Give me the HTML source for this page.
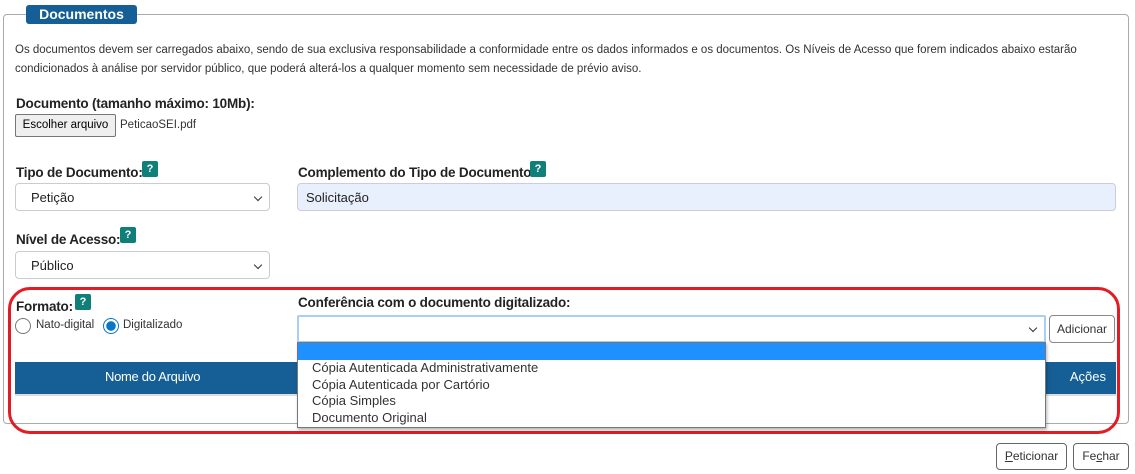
<!DOCTYPE html>
<html><head><meta charset="utf-8"><style>
body{margin:0;width:1135px;height:474px;background:#fff;font-family:"Liberation Sans",Arial,sans-serif;color:#222;position:relative;overflow:hidden}
.a{position:absolute}
.fs{left:3px;top:14px;width:1124px;height:408px;border:1px solid #aaa;border-radius:4px}
.lg{left:26px;top:5px;width:111px;height:19px;background:#155f96;border-radius:3px;color:#fff;font-weight:bold;font-size:14px;text-align:center;line-height:19px}
.t{font-size:11.5px;color:#333;line-height:19px}
.lb{font-size:13.5px;font-weight:bold;color:#222;letter-spacing:-0.2px}
.q{width:16px;height:16px;background:#107f7a;color:#fff;font-size:11px;font-weight:bold;text-align:center;line-height:16px;border-radius:2px}
.sel{border:1px solid #ccc;border-radius:4px;height:28px;background:#fff;font-size:13px;line-height:28px;box-sizing:border-box}
.chev{position:absolute;right:8px;top:10px;width:5px;height:5px;border-right:1.5px solid #333;border-bottom:1.5px solid #333;transform:rotate(45deg)}
.btn{border:1px solid #666;border-radius:4px;background:#fff;font-size:12px;text-align:center;box-sizing:border-box;color:#333}
.rad{width:16px;height:16px;border:1px solid #777;border-radius:50%;box-sizing:border-box}
</style></head><body>
<div class="a fs"></div>
<div class="a lg">Documentos</div>
<div class="a t" style="left:15px;top:41px;width:1105px">Os documentos devem ser carregados abaixo, sendo de sua exclusiva responsabilidade a conformidade entre os dados informados e os documentos. Os Níveis de Acesso que forem indicados abaixo estarão condicionados à análise por servidor público, que poderá alterá-los a qualquer momento sem necessidade de prévio aviso.</div>
<div class="a lb" style="left:16px;top:96px">Documento (tamanho máximo: 10Mb):</div>
<div class="a btn" style="left:15px;top:114px;width:101px;height:23px;line-height:21px;background:#efefef;border-color:#767676;border-radius:2px;color:#000;font-size:11.5px">Escolher arquivo</div>
<div class="a t" style="left:120px;top:116px">PeticaoSEI.pdf</div>

<div class="a lb" style="left:16px;top:165px">Tipo de Documento:</div>
<div class="a q" style="left:142px;top:161px">?</div>
<div class="a sel" style="left:15px;top:183px;width:255px;padding-left:15px">Petição<div class="chev"></div></div>
<div class="a lb" style="left:298px;top:165px">Complemento do Tipo de Documento:</div>
<div class="a q" style="left:530px;top:161px">?</div>
<div class="a sel" style="left:297px;top:183px;width:819px;padding-left:8px;background:#e8f0fe;border-color:#ccd">Solicitação</div>

<div class="a lb" style="left:16px;top:232px">Nível de Acesso:</div>
<div class="a q" style="left:120px;top:227px">?</div>
<div class="a sel" style="left:15px;top:251px;width:255px;padding-left:15px">Público<div class="chev"></div></div>

<div class="a" style="left:8px;top:287px;width:1106px;height:141px;border:3px solid #e31c23;border-radius:22px"></div>
<div class="a lb" style="left:16px;top:299px">Formato:</div>
<div class="a q" style="left:75px;top:294px">?</div>
<div class="a rad" style="left:15px;top:318px"></div>
<div class="a t" style="left:36px;top:316px">Nato-digital</div>
<div class="a rad" style="left:103px;top:318px;border:1px solid #0a76c7;background:radial-gradient(circle,#0a76c7 0 4.5px,#fff 5px)"></div>
<div class="a t" style="left:123px;top:316px">Digitalizado</div>
<div class="a lb" style="left:298px;top:295px">Conferência com o documento digitalizado:</div>
<div class="a sel" style="left:297px;top:315px;width:749px;border:2px solid #a8cff3;border-radius:2px"><div class="chev" style="right:8px;top:8px"></div></div>
<div class="a btn" style="left:1049px;top:315px;width:66px;height:28px;line-height:26px;border-color:#888">Adicionar</div>
<div class="a" style="left:15px;top:362px;width:1101px;height:32px;background:#155f96;color:#fff;font-size:13px;line-height:30px;border-bottom:2px solid #ddd"><span class="a" style="left:90px;letter-spacing:-0.3px">Nome do Arquivo</span><span class="a" style="right:10px">Ações</span></div>
<div class="a" style="left:297px;top:342px;width:747px;height:84px;background:#fff;border:1px solid #777;box-shadow:1px 2px 3px rgba(0,0,0,.3);font-size:13px;color:#333;line-height:16.5px">
<div style="background:#1e90ff;height:17px"></div>
<div style="padding-left:14px">Cópia Autenticada Administrativamente<br>Cópia Autenticada por Cartório<br>Cópia Simples<br>Documento Original</div></div>

<div class="a btn" style="left:996px;top:443px;width:71px;height:27px;line-height:25px"><u>P</u>eticionar</div>
<div class="a btn" style="left:1073px;top:443px;width:56px;height:27px;line-height:25px">Fe<u>c</u>har</div>
</body></html>
